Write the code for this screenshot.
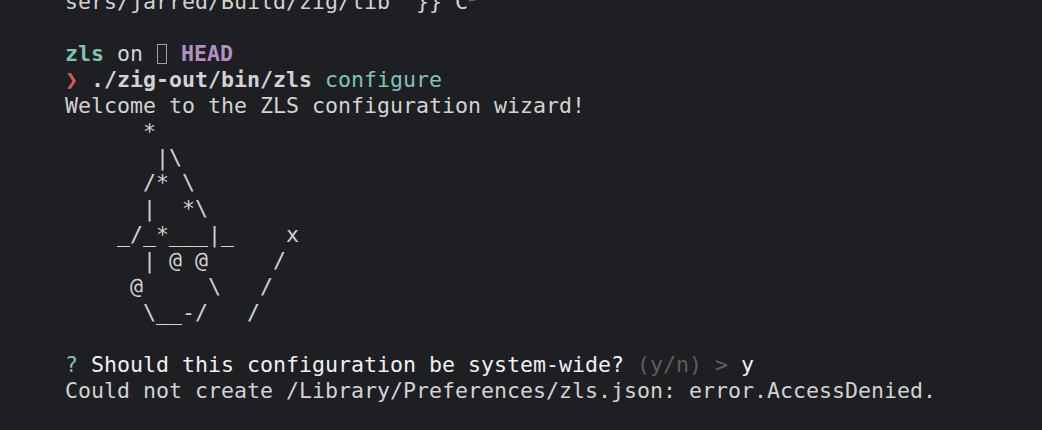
import React from 'react';

const art = [
  '      *',
  '       |\\',
  '      /* \\',
  '      |  *\\',
  '    _/_*___|_    x',
  '      | @ @     /',
  '     @     \\   /',
  '      \\__-/   /',
];

const App = () => {
  return (
    <div className="w-[1042px] h-[430px] overflow-hidden bg-[#1e1f22] text-[#d2d2d2]">
      <div
        className="-mt-[13px] pl-[65px] text-[21.6px] leading-[25.92px] whitespace-pre"
        style={{ fontFamily: '"DejaVu Sans Mono", monospace' }}
      >
        <div>
          sers/jarred/Build/zig/lib  {'}}'} C<span className="text-[12px] text-[#8a8a8a] align-[6px]">⏎</span>
        </div>
        <div>&nbsp;</div>
        <div>
          <span className="font-bold text-[#7ec4b4]">zls</span> on{' '}
          <span className="inline-block w-[10px] h-[20px] border border-[#b48ec0] align-[-3px] mx-[1px]" />{' '}
          <span className="font-bold text-[#b48ec0]">HEAD</span>
        </div>
        <div>
          <span className="font-bold text-[#d8585c]">❯</span>{' '}
          <span className="font-bold">./zig-out/bin/zls</span>{' '}
          <span className="text-[#7ec4b4]">configure</span>
        </div>
        <div>Welcome to the ZLS configuration wizard!</div>
        {art.map((line, i) => (
          <div key={i}>{line}</div>
        ))}
        <div>&nbsp;</div>
        <div>
          <span className="text-[#7ec4b4]">?</span>{' '}
          <span className="text-[#f0f0f0]">Should this configuration be system-wide?</span>{' '}
          <span className="text-[#5e5e5e]">(y/n) &gt;</span>{' '}
          <span className="text-[#f0f0f0]">y</span>
        </div>
        <div>Could not create /Library/Preferences/zls.json: error.AccessDenied.</div>
      </div>
    </div>
  );
};

export default App;
